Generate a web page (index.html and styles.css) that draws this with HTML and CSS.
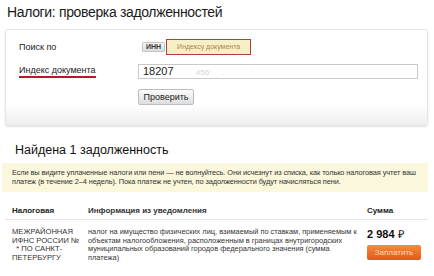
FILE: index.html
```html
<!DOCTYPE html>
<html lang="ru">
<head>
    <meta charset="UTF-8">
    <meta name="viewport" content="width=device-width, initial-scale=1.0">
    <title>Налоги: проверка задолженностей</title>
    <link rel="stylesheet" href="styles.css">
</head>
<body>
    <div class="page">
        <h1 class="title">Налоги: проверка задолженностей</h1>

        <div class="search-card">
            <div class="form-row row-type">
                <div class="form-label">Поиск по</div>
                <div class="form-control switch">
                    <button class="switch-btn">ИНН</button>
                    <button class="switch-btn switch-btn-active">Индексу документа</button>
                </div>
            </div>
            <div class="form-row row-index">
                <div class="form-label"><span class="marked">Индекс документа</span></div>
                <div class="form-control">
                    <div class="doc-input">18207<span class="hidden-part">&nbsp;&nbsp;&nbsp;&nbsp;&nbsp;&nbsp;&nbsp;&nbsp;&nbsp;&nbsp;456'&nbsp;&nbsp;&nbsp;&nbsp;&nbsp;.&nbsp;&nbsp;&nbsp;&nbsp;&nbsp;&nbsp;&nbsp;&nbsp;&nbsp;&nbsp;&nbsp;&nbsp;`</span></div>
                </div>
            </div>
            <div class="form-row row-submit">
                <div class="form-label"></div>
                <div class="form-control">
                    <button class="check-btn">Проверить</button>
                </div>
            </div>
        </div>

        <h2 class="found">Найдена 1 задолженность</h2>

        <div class="notice">
            Если вы видите уплаченные налоги или пени — не волнуйтесь. Они исчезнут из списка, как только налоговая учтет ваш
            платеж (в течение 2–4 недель). Пока платеж не учтен, по задолженности будут начисляться пени.
        </div>

        <div class="debts">
            <div class="debts-row debts-head">
                <div class="col-office">Налоговая</div>
                <div class="col-info">Информация из уведомления</div>
                <div class="col-sum">Сумма</div>
            </div>
            <div class="debts-row debts-item">
                <div class="col-office">МЕЖРАЙОННАЯ ИФНС РОССИИ №<br>&nbsp;&nbsp;* ПО САНКТ-ПЕТЕРБУРГУ</div>
                <div class="col-info">налог на имущество физических лиц, взимаемый по ставкам, применяемым к объектам налогообложения, расположенным в границах внутригородских муниципальных образований городов федерального значения (сумма платежа)</div>
                <div class="col-sum">
                    <div class="amount">2 984 <span class="rub">₽</span></div>
                    <button class="pay-btn">Заплатить</button>
                </div>
            </div>
        </div>
    </div>
</body>
</html>
```

FILE: styles.css
```css
body {
    margin: 0;
    padding: 0;
    background: white;
    font-family: "Liberation Sans", Arial, sans-serif;
    color: #222;
}

.page {
    width: 434px;
    padding: 0 6px 0 5px;
    box-sizing: border-box;
}

.title {
    margin: 0;
    padding: 3px 0 0 2px;
    font-size: 14px;
    font-weight: normal;
    letter-spacing: -0.35px;
    line-height: 18px;
    color: #1a1a1a;
}

.search-card {
    margin-top: 8px;
    height: 97px;
    box-sizing: border-box;
    padding: 9px 0 0 13px;
    border: 1px solid #e6e6e6;
    border-radius: 3px;
    background: linear-gradient(to bottom, #fff 0%, #fff 78%, #eeeeee 100%);
    box-shadow: 0 1px 2px rgba(0, 0, 0, 0.12);
}

.form-row {
    display: flex;
    align-items: center;
}

.form-label {
    width: 119px;
    flex-shrink: 0;
    font-size: 9px;
    color: #222;
}

.form-control {
    flex: 1;
}

.row-type {
    height: 16px;
}

.switch {
    display: flex;
    align-items: center;
    gap: 1px;
    margin-left: 4px;
}

.switch-btn {
    height: 10px;
    padding: 0 3px;
    border: 1px solid #c4c4c4;
    border-radius: 1px;
    background: linear-gradient(to bottom, #f6f6f6, #dcdcdc);
    font-family: inherit;
    font-size: 7px;
    font-weight: bold;
    color: #333;
    line-height: 8px;
}

.switch-btn-active {
    height: 16px;
    width: 85px;
    padding: 0;
    border: 1.5px solid #b43a44;
    border-radius: 0;
    background: #f8efc6;
    font-weight: normal;
    color: #a8884e;
}

.row-index {
    margin-top: 8px;
    height: 16px;
}

.marked {
    display: inline-block;
    padding-bottom: 1px;
    border-bottom: 2px solid #c0142c;
    line-height: 10px;
}

.doc-input {
    width: 280px;
    height: 15px;
    box-sizing: border-box;
    padding: 0 4px;
    border: 1px solid #c9c9c9;
    font-size: 11px;
    line-height: 13px;
    color: #222;
    white-space: nowrap;
    overflow: hidden;
}

.hidden-part {
    color: #d6d6d6;
    font-size: 8px;
}

.row-submit {
    margin-top: 7px;
}

.check-btn {
    height: 16px;
    width: 56px;
    padding: 0;
    border: 1px solid #bdbdbd;
    border-radius: 2px;
    background: linear-gradient(to bottom, #fbfbfb, #dedede);
    font-family: inherit;
    font-size: 9px;
    color: #222;
}

.found {
    margin: 0;
    padding: 17px 0 0 10px;
    font-size: 12.5px;
    font-weight: normal;
    line-height: 14px;
    color: #111;
}

.notice {
    margin-top: 6px;
    margin-left: -3px;
    height: 29px;
    box-sizing: border-box;
    padding: 5px 0 0 10px;
    background: #faf7dc;
    border-radius: 2px;
    font-size: 7.4px;
    letter-spacing: -0.1px;
    line-height: 9px;
    color: #333;
}

.debts {
    margin-top: 14px;
}

.debts-row {
    display: flex;
    padding-left: 7px;
    font-size: 8px;
}

.debts-head {
    height: 13px;
    border-bottom: 1px solid #e4e4e4;
    font-weight: bold;
    color: #222;
}

.debts-item {
    padding-top: 8px;
    height: 52px;
    border-bottom: 1px solid #e0e0e0;
    line-height: 8.5px;
}

.col-office {
    width: 76px;
    flex-shrink: 0;
}

.debts-item .col-office {
    font-size: 7.6px;
    color: #333;
}

.col-info {
    width: 279px;
    flex-shrink: 0;
    padding-right: 10px;
    box-sizing: border-box;
    color: #333;
}

.debts-item .col-info {
    font-size: 7.4px;
}

.col-sum {
    flex: 1;
}

.amount {
    font-size: 11px;
    font-weight: bold;
    line-height: 12px;
    color: #111;
}

.rub {
    font-weight: normal;
}

.pay-btn {
    margin-top: 5px;
    width: 54px;
    height: 15px;
    padding: 0;
    border: none;
    border-radius: 2px;
    background: linear-gradient(to bottom, #f78a3e, #e35a12);
    font-family: inherit;
    font-size: 8px;
    color: #fbd6b8;
}
```
